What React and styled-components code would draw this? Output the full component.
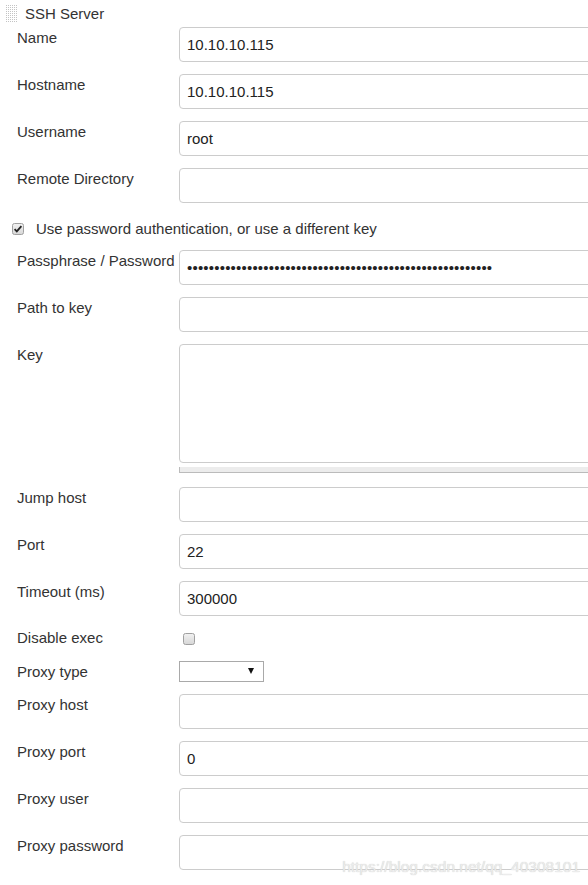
import React from "react";
import styled, { createGlobalStyle } from "styled-components";

const GlobalStyle = createGlobalStyle`
  html, body {
    margin: 0;
    padding: 0;
    background: #fff;
    overflow: hidden;
  }
  body {
    font-family: "Liberation Sans", Arial, sans-serif;
    font-size: 15px;
    color: #333;
  }
`;

const Page = styled.div`
  position: relative;
  width: 588px;
  height: 885px;
  overflow: hidden;
`;

const Header = styled.div`
  display: flex;
  align-items: center;
  gap: 7px;
  height: 27px;
  padding-left: 6px;
  box-sizing: border-box;
`;

const HeaderTitle = styled.span`
  line-height: 17px;
  color: #333;
`;

const Form = styled.div`
  display: flex;
  flex-direction: column;
  gap: 12px;
  width: 640px;
`;

const Row = styled.div`
  display: grid;
  grid-template-columns: 179px 1fr;
  align-items: start;
  margin-top: ${({ $top }) => $top || 0}px;
`;

const Label = styled.div`
  padding-left: 17px;
  padding-top: ${({ $pad }) => ($pad === undefined ? 2 : $pad)}px;
  line-height: 17px;
  color: #333;
  white-space: nowrap;
`;

const Input = styled.input`
  display: block;
  box-sizing: border-box;
  width: 100%;
  height: 35px;
  margin: 0;
  padding: 0 7px;
  border: 1px solid #ccc;
  border-radius: 4px;
  font-family: "Liberation Sans", Arial, sans-serif;
  font-size: 15px;
  color: #222;
  background: #fff;
  outline: none;
  letter-spacing: ${({ type }) => (type === "password" ? "0.2px" : "normal")};
`;

const KeyBox = styled.div`
  display: flex;
  flex-direction: column;
  gap: 4px;
`;

const TextArea = styled.textarea`
  display: block;
  box-sizing: border-box;
  width: 100%;
  height: 119px;
  margin: 0;
  padding: 6px 7px;
  border: 1px solid #ccc;
  border-radius: 4px;
  resize: none;
  outline: none;
  font-family: "Liberation Sans", Arial, sans-serif;
  font-size: 15px;
`;

const Handle = styled.div`
  height: 6px;
  box-sizing: border-box;
  background: #ececec;
  border-left: 1px solid #bbb;
  border-bottom: 1px solid #bbb;
`;

const CheckRow = styled.div`
  display: flex;
  align-items: flex-start;
  gap: 12px;
  height: 23px;
  box-sizing: border-box;
  padding: 5px 0 0 12px;
  line-height: 17px;
  color: #333;

  svg {
    margin-top: 3px;
  }
`;

const CheckCell = styled.div`
  padding: 3px 0 0 4px;
  height: 21px;
  box-sizing: border-box;
`;

const Select = styled.div`
  position: relative;
  box-sizing: border-box;
  width: 85px;
  height: 21px;
  border: 1px solid #a9a9a9;
  background: #fff;
`;

const Arrow = styled.span`
  position: absolute;
  right: 9px;
  top: 6px;
  width: 0;
  height: 0;
  border-left: 3.5px solid transparent;
  border-right: 3.5px solid transparent;
  border-top: 6px solid #111;
`;

const Watermark = styled.div`
  position: absolute;
  right: 8px;
  bottom: 9px;
  font-family: "Liberation Sans", Arial, sans-serif;
  font-size: 15.5px;
  color: #ececec;
  text-shadow: 0 0 1px #c4c4c4;
  pointer-events: none;
`;

const Grip = () => (
  <svg width="12" height="19" viewBox="0 0 12 19">
    {Array.from({ length: 9 }).map((_, r) =>
      Array.from({ length: 6 }).map((_, c) => (
        <rect key={r + "-" + c} x={c * 2} y={r * 2 + 1} width="1" height="1" fill="#c4c4c4" />
      ))
    )}
  </svg>
);

const Checkbox = ({ checked }) => (
  <svg width="12" height="12" viewBox="0 0 12 12">
    <defs>
      <linearGradient id={checked ? "cbOn" : "cbOff"} x1="0" y1="0" x2="0" y2="1">
        <stop offset="0" stopColor="#f2f2f2" />
        <stop offset="1" stopColor="#d6d6d6" />
      </linearGradient>
    </defs>
    <rect
      x="0.5"
      y="0.5"
      width="11"
      height="11"
      rx="2"
      fill={`url(#${checked ? "cbOn" : "cbOff"})`}
      stroke="#a0a0a0"
    />
    {checked && (
      <path d="M2.6 6.2 L4.8 8.4 L9.4 3.2" fill="none" stroke="#222" strokeWidth="1.8" />
    )}
  </svg>
);

const Field = ({ label, value = "", type = "text" }) => (
  <Row>
    <Label>{label}</Label>
    <Input type={type} defaultValue={value} readOnly />
  </Row>
);

export default function App() {
  return (
    <>
      <GlobalStyle />
      <Page>
        <Header>
          <Grip />
          <HeaderTitle>SSH Server</HeaderTitle>
        </Header>
        <Form>
          <Field label="Name" value="10.10.10.115" />
          <Field label="Hostname" value="10.10.10.115" />
          <Field label="Username" value="root" />
          <Field label="Remote Directory" />
          <CheckRow>
            <Checkbox checked />
            Use password authentication, or use a different key
          </CheckRow>
          <Field
            label="Passphrase / Password"
            type="password"
            value={"x".repeat(56)}
          />
          <Field label="Path to key" />
          <Row>
            <Label>Key</Label>
            <KeyBox>
              <TextArea readOnly />
              <Handle />
            </KeyBox>
          </Row>
          <Row $top={2}>
            <Label>Jump host</Label>
            <Input readOnly />
          </Row>
          <Field label="Port" value="22" />
          <Field label="Timeout (ms)" value="300000" />
          <Row>
            <Label $pad={1}>Disable exec</Label>
            <CheckCell>
              <Checkbox />
            </CheckCell>
          </Row>
          <Row>
            <Label>Proxy type</Label>
            <Select>
              <Arrow />
            </Select>
          </Row>
          <Field label="Proxy host" />
          <Field label="Proxy port" value="0" />
          <Field label="Proxy user" />
          <Field label="Proxy password" />
        </Form>
        <Watermark>https://blog.csdn.net/qq_40308101</Watermark>
      </Page>
    </>
  );
}
